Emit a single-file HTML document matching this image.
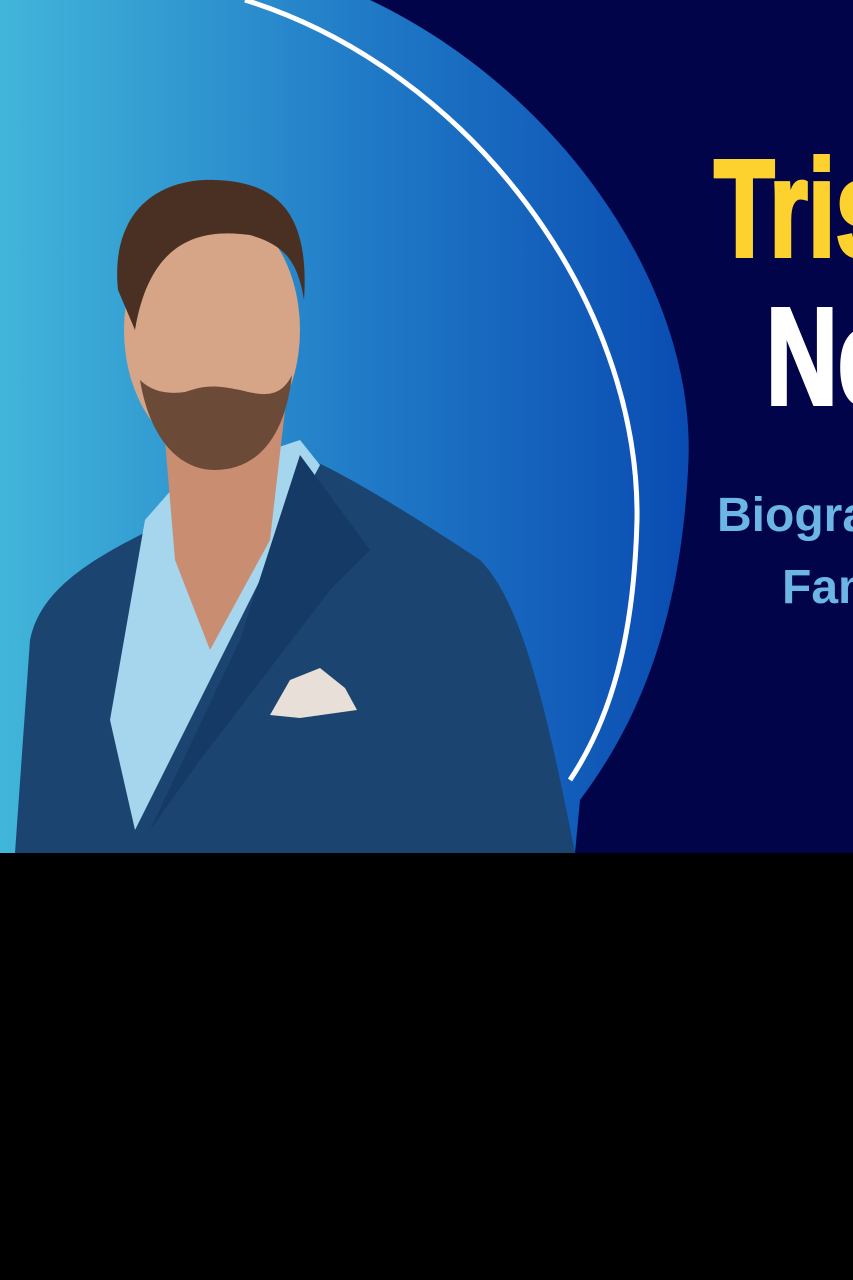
<!DOCTYPE html>
<html><head><meta charset="utf-8"><style>
html,body{margin:0;padding:0;background:#000;width:853px;height:1280px;overflow:hidden}
#g{position:relative;width:853px;height:853px;background:#02044a;overflow:hidden}
svg{position:absolute;left:0;top:0}
.t{position:absolute;font-family:"Liberation Sans",sans-serif;font-weight:bold;white-space:nowrap;transform-origin:0 0}
.h{-webkit-text-stroke:4px currentColor}
</style></head><body>
<div id="g">
<svg width="853" height="853" viewBox="0 0 853 853">
<defs>
<linearGradient id="b" x1="0" x2="1" y1="0" y2="0">
<stop offset="0" stop-color="#42b6da"/><stop offset="0.55" stop-color="#1f78c6"/><stop offset="1" stop-color="#0a4cb2"/>
</linearGradient>
</defs>
<path d="M0,0 L370,0 C560,90 700,290 688,470 C680,620 640,720 580,800 L575,853 L0,853 Z" fill="url(#b)"/>
<path d="M245,0 C470,70 640,300 637,520 C634,640 610,720 570,780" fill="none" stroke="#fff" stroke-width="5"/>
<!-- suit -->
<path d="M15,853 L30,640 C40,590 90,560 150,530 L300,455 C340,470 420,520 480,560 C520,600 545,700 575,853 Z" fill="#1b4470"/>
<!-- shirt -->
<path d="M145,520 L180,480 L300,440 L320,465 L270,560 L200,700 L135,830 L110,720 Z" fill="#a6d6ee"/>
<!-- neck/chest -->
<path d="M165,440 L285,410 L270,540 L210,650 L175,560 Z" fill="#c98e72"/>
<!-- lapels -->
<path d="M300,455 L370,550 L330,590 L200,760 L150,830 L240,640 Z" fill="#153a66"/>
<!-- pocket square -->
<path d="M270,715 L290,680 L320,668 L345,688 L357,710 L300,718 Z" fill="#e8e0d8"/>
<!-- head -->
<ellipse cx="212" cy="330" rx="88" ry="125" fill="#d6a486"/>
<path d="M140,380 C150,440 180,470 215,470 C255,470 285,440 292,375 C280,400 260,395 240,390 C215,385 205,385 185,392 C165,395 150,390 140,380 Z" fill="#6b4a38"/>
<path d="M118,290 C110,210 160,178 215,180 C275,182 310,210 304,300 C298,262 285,245 250,235 C200,228 150,240 135,330 Z" fill="#4a3022"/>
</svg>
<div class="t h" style="left:714px;top:130px;font-size:138px;color:#fdd22e;transform:scaleX(0.72)">Tristan</div>
<div class="t h" style="left:766px;top:278px;font-size:138px;color:#fff;transform:scaleX(0.72)">Net</div>
<div class="t" style="left:717px;top:488px;font-size:48px;color:#6cb6e6">Biography</div>
<div class="t" style="left:782px;top:560px;font-size:48px;color:#6cb6e6">Family</div>
</div>
</body></html>
